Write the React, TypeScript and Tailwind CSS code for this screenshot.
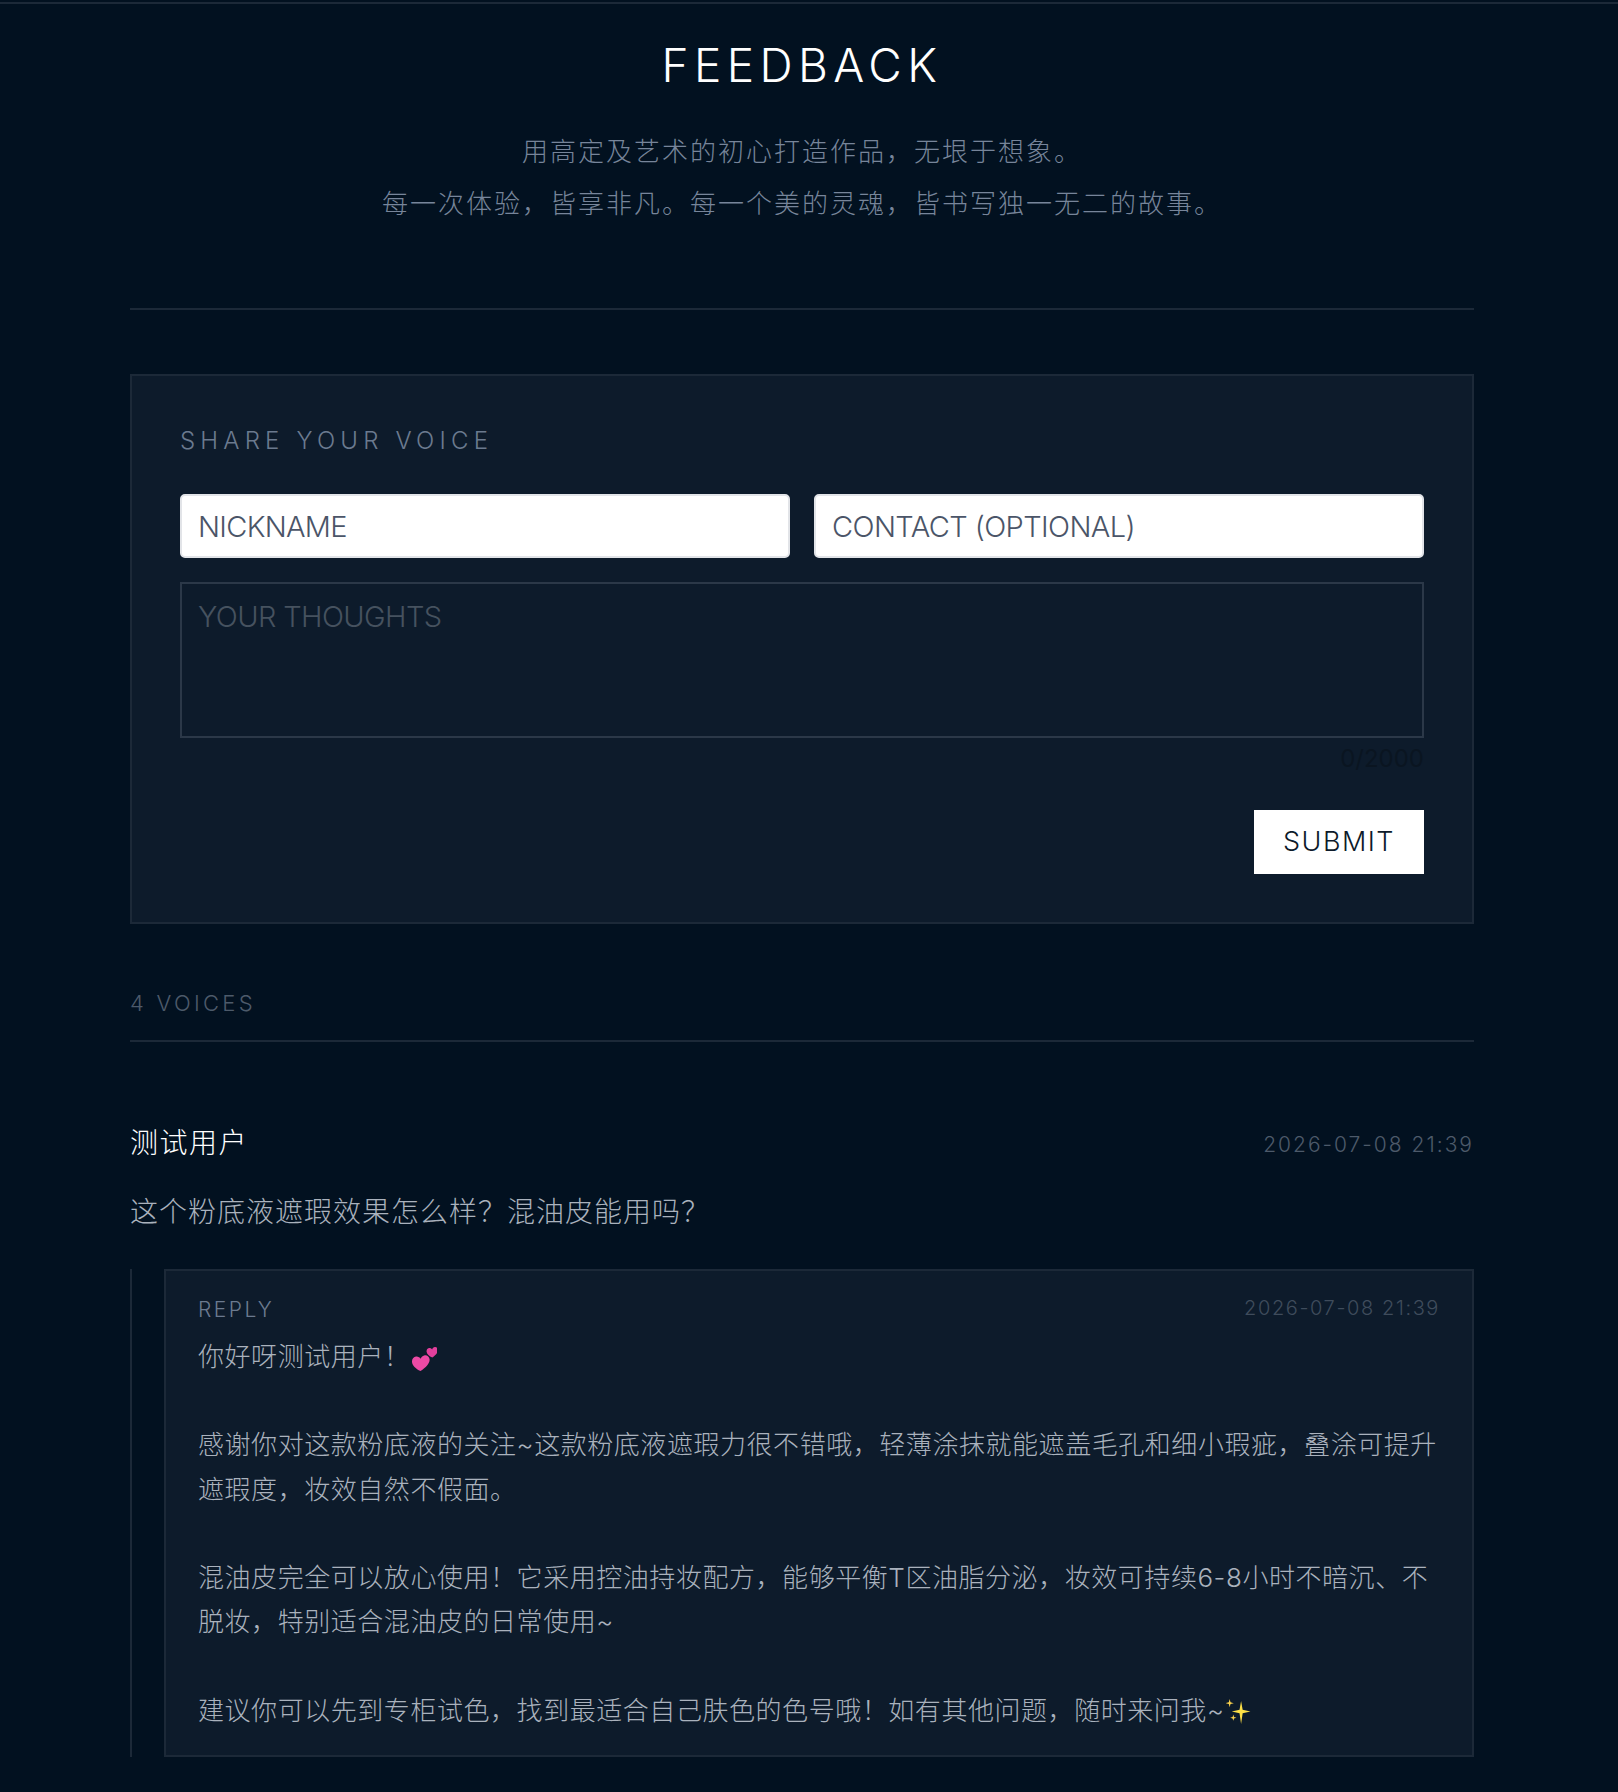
const FONT = "font-['Inter','Noto_Sans_CJK_SC',sans-serif]";

function Hearts() {
  return (
    <svg viewBox="0 0 24 24" className="inline-block w-[25px] h-[25px] ml-[2px] align-[-5px]">
      <path d="M8.200 24C3.500 21.800.2 18.700 0 15.300c-.2-2.700 1.500-4.800 3.800-5.200 1.900-.3 3.500.6 4.500 2.200.6-1.900 2.100-3.300 4.100-3.500 2.400-.2 4.300 1.500 4.500 4 .3 3.600-3.300 7.800-8.700 11.200z" fill="#ec4aa5" />
      <path d="M19.500 11c-3-1.400-5.200-3.400-5.500-5.600-.2-1.800.8-3.200 2.300-3.500 1.200-.2 2.300.3 3 1.400.4-1.200 1.400-2.200 2.700-2.300 1.500-.1 2.700 1 2.900 2.600.2 2.400-2 5.200-5.400 7.400z" fill="#e23f9c" />
    </svg>
  );
}

function Sparkles() {
  return (
    <svg viewBox="0 0 24 26" className="inline-block w-[25px] h-[27px] ml-[2px] align-[-5px]">
      <path d="M14.500 3l1.500 8.200 7.500 1.800-7.500 1.800L14.500 25 13 14.800 5.500 13l7.500-1.800z" fill="#fde047" />
      <path d="M3.500 1l.8 3.200 3.200.8-3.200.8L3.500 9l-.8-3.200L-.5 5l3.200-.8z" fill="#fcd34d" />
      <path d="M7 16l.7 2.300L10 19l-2.300.7L7 22l-.7-2.300L4 19l2.300-.7z" fill="#fcd34d" />
    </svg>
  );
}

export default function App() {
  return (
    <div className={`min-h-[1792px] bg-[#021120] ${FONT}`}>
      <div className="h-[4px] pt-[2px]">
        <div className="h-[2px] bg-[#1c2938]" />
      </div>
      <main className="w-[1344px] ml-[130px]">
        {/* Hero */}
        <header className="h-[306px] border-b-2 border-[#1c2938] text-center">
          <h1 className="pt-[30px] text-[46px] leading-[62px] font-light tracking-[5.4px] text-white">FEEDBACK</h1>
          <p className="mt-[30px] text-[26px] leading-[52px] font-light tracking-[2px] text-[#77859a]">
            用高定及艺术的初心打造作品，无垠于想象。
            <br />
            每一次体验，皆享非凡。每一个美的灵魂，皆书写独一无二的故事。
          </p>
        </header>

        {/* Form */}
        <section className="mt-[64px] h-[550px] border-2 border-[#1c2938] bg-[#0d1b2b] p-[48px]">
          <h2 className="h-[30px] mt-[2px] text-[24px] leading-[30px] font-light tracking-[5.2px] text-[#6b7a8f]">SHARE YOUR VOICE</h2>
          <div className="mt-[38px] grid grid-cols-2 gap-[24px]">
            <input
              placeholder="NICKNAME"
              className="h-[64px] min-w-0 rounded-[5px] border-2 border-[#e2e4e8] bg-white px-[16px] text-[29px] tracking-[-0.7px] font-light outline-none placeholder:text-[#4b5568]"
            />
            <input
              placeholder="CONTACT (OPTIONAL)"
              className="h-[64px] min-w-0 rounded-[5px] border-2 border-[#e2e4e8] bg-white px-[16px] text-[29px] tracking-[-0.6px] font-light outline-none placeholder:text-[#4b5568]"
            />
          </div>
          <textarea
            placeholder="YOUR THOUGHTS"
            className="mt-[24px] block h-[156px] w-full resize-none border-2 border-[#2b3848] bg-transparent px-[16px] py-[13px] text-[29px] leading-[40px] tracking-[-0.6px] font-light outline-none placeholder:text-[#46525f]"
          />
          <div className="mt-[7px] text-right text-[24px] leading-[28px] font-normal text-[#0a1521]">0/2000</div>
          <div className="mt-[37px] flex justify-end">
            <button type="button" className="h-[64px] w-[170px] bg-white text-[27px] font-light tracking-[1.5px] text-[#0d1a2a]">
              SUBMIT
            </button>
          </div>
        </section>

        {/* Voices */}
        <div className="mt-[63px] h-[55px] border-b-2 border-[#1c2938] text-[22px] leading-[32px] font-light tracking-[3.3px] text-[#4d5a6a]">
          4 VOICES
        </div>

        <article className="mt-[81px]">
          <div className="flex items-center justify-between h-[40px]">
            <span className="text-[28px] font-light tracking-[1.5px] text-white">测试用户</span>
            <span className="mt-[3px] text-[21px] font-light tracking-[2px] text-[#4d5a6a]">2026-07-08 21:39</span>
          </div>
          <p className="mt-[29px] text-[28px] leading-[40px] font-light tracking-[1px] text-[#aab2bd]">这个粉底液遮瑕效果怎么样？混油皮能用吗？</p>

          <div className="mt-[37px] border-l-2 border-[#1c2938] pl-[32px]">
            <div className="border-2 border-[#1c2938] bg-[#0d1b2b] px-[32px] pt-[24px] pb-[22px]">
              <div className="flex items-start justify-between h-[28px]">
                <span className="mt-[2px] text-[21px] leading-[26px] font-light tracking-[2.5px] text-[#6b7a8f]">REPLY</span>
                <span className="text-[20px] leading-[26px] font-light tracking-[1.6px] text-[#3f4c5c]">2026-07-08 21:39</span>
              </div>
              <div className="mt-[12px] whitespace-pre-wrap text-[26px] leading-[44.2px] font-light tracking-[0.55px] text-[#aab2bd]">
                你好呀测试用户！<Hearts />
                {"\n\n"}感谢你对这款粉底液的关注~这款粉底液遮瑕力很不错哦，轻薄涂抹就能遮盖毛孔和细小瑕疵，叠涂可提升遮瑕度，妆效自然不假面。
                {"\n\n"}混油皮完全可以放心使用！它采用控油持妆配方，能够平衡T区油脂分泌，妆效可持续6-8小时不暗沉、不脱妆，特别适合混油皮的日常使用~
                {"\n\n"}建议你可以先到专柜试色，找到最适合自己肤色的色号哦！如有其他问题，随时来问我~<Sparkles />
              </div>
            </div>
          </div>
        </article>
      </main>
    </div>
  );
}
